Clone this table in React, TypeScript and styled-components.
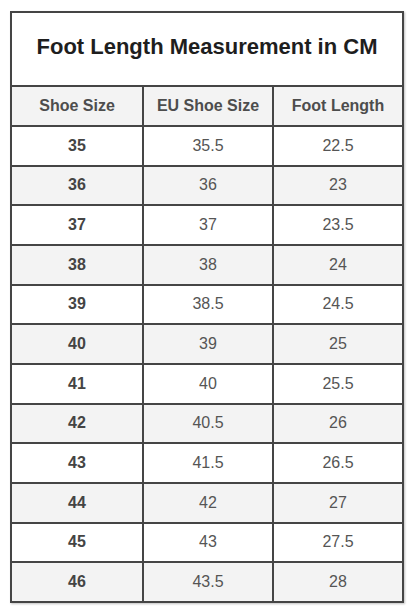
import React from "react";
import styled, { createGlobalStyle } from "styled-components";

const Global = createGlobalStyle`
  html, body { margin: 0; padding: 0; background: #ffffff; }
  body { font-family: "Liberation Sans", Arial, sans-serif; }
`;

const Page = styled.div`
  width: 416px;
  height: 612px;
  box-sizing: border-box;
  padding: 11px 12px 0 10px;
  background: #ffffff;
`;

const Table = styled.div`
  display: flex;
  flex-direction: column;
  width: 394px;
  box-sizing: border-box;
  border: 2px solid #454545;
  box-shadow: 1px 1px 2px rgba(0, 0, 0, 0.25);
`;

const Title = styled.div`
  height: 72px;
  box-sizing: border-box;
  padding-bottom: 4px;
  display: flex;
  align-items: center;
  justify-content: center;
  font-size: 22px;
  font-weight: bold;
  color: #1e1e1e;
  background: #ffffff;
`;

const Row = styled.div<{ $shade: boolean; $h: number }>`
  display: grid;
  grid-template-columns: 1fr 1fr 1fr;
  height: ${(p) => p.$h}px;
  box-sizing: content-box;
  border-top: 2px solid #454545;
  background: ${(p) => (p.$shade ? "#f3f3f3" : "#ffffff")};
`;

const Cell = styled.div<{ $bold?: boolean; $head?: boolean }>`
  display: flex;
  align-items: center;
  justify-content: center;
  font-size: 16px;
  font-weight: ${(p) => (p.$bold || p.$head ? "bold" : "normal")};
  color: ${(p) => (p.$head ? "#4d4d4d" : p.$bold ? "#444444" : "#555555")};
  & + & {
    border-left: 2px solid #454545;
  }
`;

const data: [string, string, string][] = [
  ["35", "35.5", "22.5"],
  ["36", "36", "23"],
  ["37", "37", "23.5"],
  ["38", "38", "24"],
  ["39", "38.5", "24.5"],
  ["40", "39", "25"],
  ["41", "40", "25.5"],
  ["42", "40.5", "26"],
  ["43", "41.5", "26.5"],
  ["44", "42", "27"],
  ["45", "43", "27.5"],
  ["46", "43.5", "28"],
];

export default function App() {
  return (
    <>
      <Global />
      <Page>
        <Table>
          <Title>Foot Length Measurement in CM</Title>
          <Row $shade={true} $h={38}>
            <Cell $head>Shoe Size</Cell>
            <Cell $head>EU Shoe Size</Cell>
            <Cell $head>Foot Length</Cell>
          </Row>
          {data.map((r, i) => (
            <Row key={r[0]} $shade={i % 2 === 1} $h={37.67}>
              <Cell $bold>{r[0]}</Cell>
              <Cell>{r[1]}</Cell>
              <Cell>{r[2]}</Cell>
            </Row>
          ))}
        </Table>
      </Page>
    </>
  );
}
